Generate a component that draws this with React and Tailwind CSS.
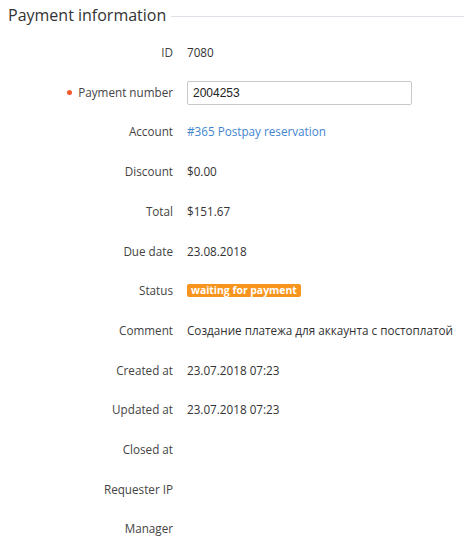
import React from 'react';

const rows = [
  { label: 'ID', value: '7080' },
  { label: 'Payment number', type: 'input', value: '2004253', required: true },
  { label: 'Account', type: 'link', value: '#365 Postpay reservation' },
  { label: 'Discount', value: '$0.00' },
  { label: 'Total', value: '$151.67' },
  { label: 'Due date', value: '23.08.2018' },
  { label: 'Status', type: 'badge', value: 'waiting for payment' },
  { label: 'Comment', value: 'Создание платежа для аккаунта с постоплатой' },
  { label: 'Created at', value: '23.07.2018 07:23' },
  { label: 'Updated at', value: '23.07.2018 07:23' },
  { label: 'Closed at', value: '' },
  { label: 'Requester IP', value: '' },
  { label: 'Manager', value: '' },
];

function Value({ row }) {
  if (row.type === 'input') {
    return (
      <input
        defaultValue={row.value}
        className="w-[225px] h-[24px] border border-[#c8c8c8] rounded-[2px] px-[5px] text-[12px] text-[#222] bg-white outline-none font-['Liberation_Sans',sans-serif]"
      />
    );
  }
  if (row.type === 'link') {
    return <a className="text-[#3f86d0]">{row.value}</a>;
  }
  if (row.type === 'badge') {
    return (
      <span className="inline-block bg-[#f7941d] text-white font-bold text-[10.4px] leading-[13px] px-[4px] rounded-[2px]">
        {row.value}
      </span>
    );
  }
  return <span className="text-[#333]">{row.value}</span>;
}

export default function App() {
  return (
    <div className="w-[464px] h-[545px] bg-white font-['Open_Sans',sans-serif] overflow-hidden">
      <div className="flex items-center pl-[8px] pt-[3px]">
        <h2 className="text-[16px] leading-[24px] text-[#333] whitespace-nowrap">Payment information</h2>
        <div className="flex-1 h-px bg-[#dde1e8] ml-[5px] mt-[2px]" />
      </div>
      <div className="pt-[6px]">
        {rows.map((row) => (
          <div key={row.label} className="flex items-center h-[39.7px] text-[11.7px]">
            <div className="w-[173px] flex items-center justify-end text-[#444]">
              {row.required && <span className="w-[5px] h-[5px] rounded-full bg-[#f05a2a] mr-[6px]" />}
              {row.label}
            </div>
            <div className="pl-[14px] flex items-center">
              <Value row={row} />
            </div>
          </div>
        ))}
      </div>
    </div>
  );
}
